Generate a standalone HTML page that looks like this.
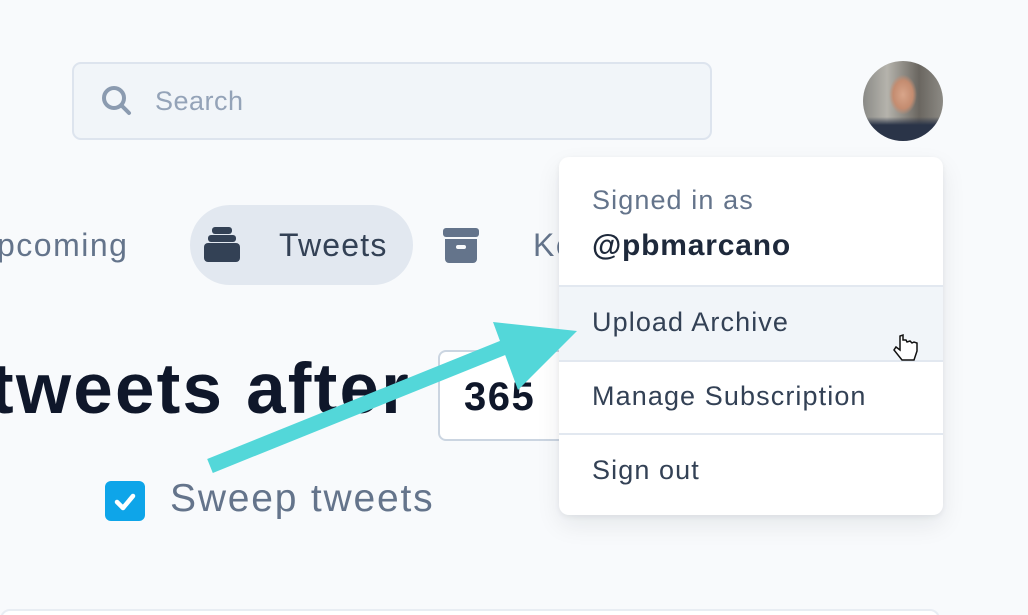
<!DOCTYPE html>
<html><head><meta charset="utf-8"><style>
*{margin:0;padding:0;box-sizing:border-box}
html,body{width:1028px;height:615px;overflow:hidden;background:#f8fafc;font-family:"Liberation Sans",sans-serif;position:relative}
.abs{position:absolute;white-space:nowrap}
.search{left:72px;top:62px;width:640px;height:78px;background:#f1f5f9;border:2px solid #dde4ee;border-radius:9px}
.search span{position:absolute;left:81px;top:22px;font-size:27px;color:#94a3b8;letter-spacing:0.5px}
.avatar{left:863px;top:61px;width:80px;height:80px;border-radius:50%;overflow:hidden;background:radial-gradient(ellipse 14px 20px at 50% 42%,#d8a58a 0,#c48c70 70%,transparent 100%),linear-gradient(180deg,transparent 70%,#2a3448 80%),linear-gradient(90deg,#8a8a86,#b5b3ac 30%,#6a6660 70%,#8c8a84);}
.tab{font-size:32px;color:#64748b;top:227px;letter-spacing:1.5px}
.pill{left:190px;top:205px;width:223px;height:80px;border-radius:40px;background:#e2e8f0}
.h1{left:-10px;top:349px;font-size:71px;font-weight:bold;color:#0f172a;letter-spacing:2.2px}
.inp{left:438px;top:350px;width:140px;height:91px;border:2px solid #cbd5e1;border-radius:8px;background:#fff}
.inp span{position:absolute;left:24px;top:23px;font-size:40px;font-weight:bold;color:#0f172a;letter-spacing:1.5px}
.cb{left:105px;top:481px;width:40px;height:40px;border-radius:6px;background:#0ea5e9}
.sweep{left:170px;top:477px;font-size:39px;color:#64748b;letter-spacing:1.8px}
.menu{left:559px;top:157px;width:384px;height:358px;background:#fff;border-radius:10px;box-shadow:0 10px 25px rgba(15,23,42,.08),0 2px 6px rgba(15,23,42,.06);overflow:hidden}
.menu div{position:absolute;left:0;width:100%;padding-left:33px;font-size:27px;color:#334155;letter-spacing:1.1px}
.card{left:0;top:609px;width:940px;height:20px;background:#fff;border:2px solid #e8edf3;border-radius:10px}
</style></head><body>
<div class="abs search">
<svg class="abs" style="left:24px;top:18px" width="40" height="40" viewBox="0 0 40 40"><circle cx="16" cy="16" r="10" fill="none" stroke="#8b9bb0" stroke-width="4"/><line x1="23.5" y1="23.5" x2="31" y2="31" stroke="#8b9bb0" stroke-width="4" stroke-linecap="round"/></svg>
<span>Search</span></div>
<div class="abs avatar"></div>
<div class="abs tab" style="left:-3px">pcoming</div>
<div class="abs pill"></div>
<svg class="abs" style="left:203px;top:227px" width="38" height="36" viewBox="0 0 38 36"><rect x="9" y="0" width="20" height="7" rx="3" fill="#334155"/><rect x="5" y="8" width="28" height="7" rx="3" fill="#334155"/><rect x="1" y="16" width="36" height="19" rx="4" fill="#334155"/></svg>
<div class="abs tab" style="left:279px;color:#334155;letter-spacing:1.2px">Tweets</div>
<svg class="abs" style="left:443px;top:228px" width="37" height="35" viewBox="0 0 37 35"><rect x="0" y="0" width="36" height="9" rx="3" fill="#64748b"/><path d="M2 11h32v20a4 4 0 0 1-4 4H6a4 4 0 0 1-4-4z" fill="#64748b"/><rect x="13" y="17" width="10" height="4" rx="2" fill="#f8fafc"/></svg>
<div class="abs tab" style="left:533px">Ke</div>
<div class="abs h1">tweets after</div>
<div class="abs inp"><span>365</span></div>
<div class="abs cb"><svg width="40" height="40" viewBox="0 0 40 40"><path d="M12 21l6 6 10-12" fill="none" stroke="#fff" stroke-width="4.5" stroke-linecap="round" stroke-linejoin="round"/></svg></div>
<div class="abs sweep">Sweep tweets</div>
<div class="abs card"></div>
<div class="abs menu">
<div style="top:28px;color:#64748b">Signed in as</div>
<div style="top:72px;font-size:30px;font-weight:bold;color:#1e293b;letter-spacing:0.8px">@pbmarcano</div>
<div style="top:128px;height:2px;background:#e2e8f0;padding:0"></div>
<div style="top:130px;height:73px;background:#f1f5f9;padding-top:20px">Upload Archive</div>
<div style="top:203px;height:2px;background:#e2e8f0;padding:0"></div>
<div style="top:224px">Manage Subscription</div>
<div style="top:276px;height:2px;background:#e2e8f0;padding:0"></div>
<div style="top:298px">Sign out</div>
</div>
<svg class="abs" style="left:0;top:0" width="1028" height="615"><line x1="210" y1="466" x2="510" y2="345" stroke="#53d7d9" stroke-width="15"/><polygon points="493,322 577,331 518,390" fill="#53d7d9"/>
<path d="M900 336v14l-4-3-2 3 8 10h12l3-9v-8l-3-1-2 1-2-2-3 1-1-2h-3v-5z" fill="#fff" stroke="#111" stroke-width="1.5"/></svg>
</body></html>
